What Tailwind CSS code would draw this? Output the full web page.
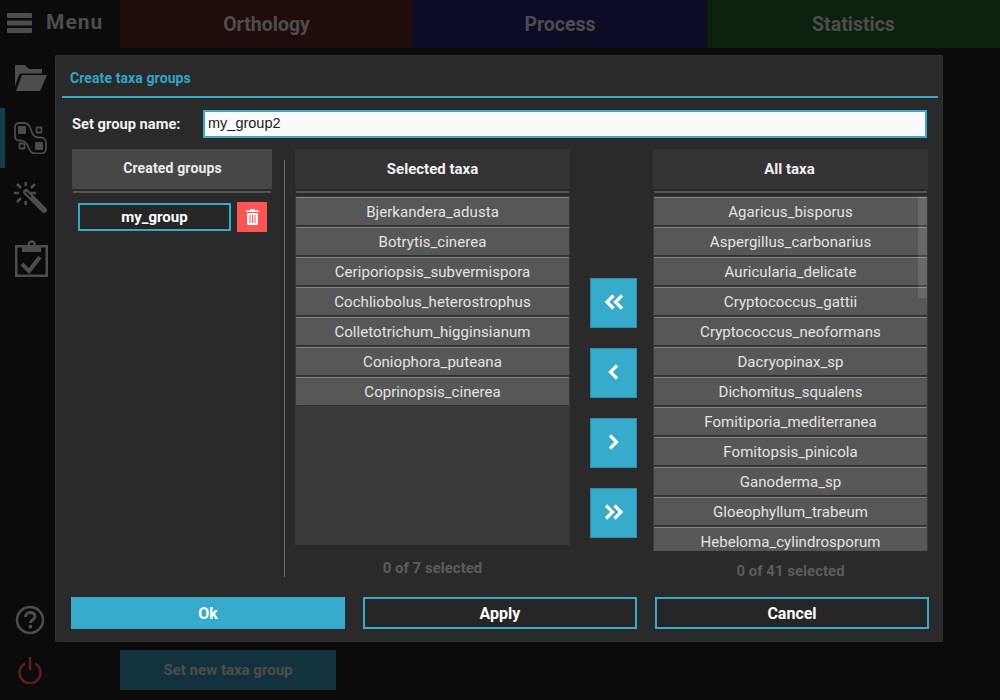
<!DOCTYPE html>
<html lang="en">
<head>
    <meta charset="UTF-8">
    <title>Create taxa groups</title>
    <script src="https://cdn.jsdelivr.net/npm/@tailwindcss/browser@4"></script>
</head>
<body class="bg-[#0b0b0b] font-['Roboto',sans-serif] overflow-hidden">
<div class="relative w-[1000px] h-[700px] flex flex-col">

    <!-- Top bar, dimmed behind the dialog -->
    <header class="flex h-[48px] shrink-0">
        <div class="w-[120px] flex items-center pl-[7px] gap-[14px] pb-[3px] text-[#4d4d4d]">
            <svg width="25" height="20" viewBox="0 0 25 20" fill="#4d4d4d"><rect width="25" height="5" y="0" rx="1"/><rect width="25" height="5" y="7.500" rx="1"/><rect width="25" height="5" y="15" rx="1"/></svg>
            <span class="text-[21px] font-bold tracking-[1px]">Menu</span>
        </div>
        <div class="w-[293px] pt-[2px] flex items-center justify-center bg-[#210c0c] text-[#4d4d4d] text-[19.500px] font-bold">Orthology</div>
        <div class="w-[294px] pt-[2px] flex items-center justify-center bg-[#0c0c27] text-[#4d4d4d] text-[19.500px] font-bold">Process</div>
        <div class="w-[293px] pt-[2px] flex items-center justify-center bg-[#0c210c] text-[#4d4d4d] text-[19.500px] font-bold">Statistics</div>
    </header>

    <div class="flex flex-1">
        <!-- Side rail -->
        <aside class="w-[60px] flex flex-col">
            <div class="h-[60px] flex items-center justify-center pl-[2px]">
                <svg width="32" height="26" viewBox="0 0 32 26" fill="#4d4d4d"><path d="M0 0h10l4 4h13v4.500H6a2 2 0 0 0-2 1.500L0 21z"/><path d="M7 10h25l-7 16H1z"/></svg>
            </div>
            <div class="h-[60px] flex items-center justify-center border-l-[5px] border-[#123d4a] pr-[4px]">
                <svg width="33" height="32" viewBox="0 0 33 32" fill="none" stroke="#4a4a4a" stroke-width="1.800"><path d="M5 1h5c4 0 6 3 7 7s3 7 7 7.500h3a5 5 0 0 1 5 5v6a5 5 0 0 1-5 5h-6c-3 0-5-2-6-5s-3-7-7-8H5a4 4 0 0 1-4-4V5a4 4 0 0 1 4-4z"/><rect x="4" y="4" width="8" height="8" rx="1" fill="#4a4a4a" stroke="none"/><rect x="22.500" y="5.500" width="5" height="5" rx="0.500"/><rect x="5.500" y="21.500" width="5" height="5" rx="0.500"/><rect x="21" y="20" width="8" height="8" rx="1" fill="#4a4a4a" stroke="none"/></svg>
            </div>
            <div class="h-[60px] flex items-center justify-center pl-[2px]">
                <svg width="34" height="34" viewBox="0 0 34 34" fill="none" stroke="#4d4d4d" stroke-width="2.500"><path d="M12 11l18 18" stroke-width="6" stroke-linecap="round"/><path d="M12 11l5 5" stroke="#0b0b0b" stroke-width="1.500"/><path d="M11.700 1v4M11.700 20v4M0 12h5M17 12h5M3 3l4 4M21 3l-4 4M3 21l4-4"/></svg>
            </div>
            <div class="h-[60px] flex items-center justify-center pl-[2px]">
                <svg width="33" height="37" viewBox="0 0 33 37" fill="none" stroke="#4d4d4d" stroke-width="2.500"><path d="M7 6.200H1.250v29.500h30.500V6.200H26"/><rect x="7" y="5" width="19" height="7" fill="#4d4d4d" stroke="none"/><circle cx="16.700" cy="4.500" r="3"/><path d="M7 24l7 7 11-14" stroke-width="4"/></svg>
            </div>
            <div class="mt-auto h-[50px] flex items-center justify-center">
                <svg width="30" height="30" viewBox="0 0 30 30" fill="none" stroke="#4d4d4d" stroke-width="2.500"><circle cx="15" cy="15" r="13"/><path d="M10.500 12c0-6 9.500-6 9.500-.5 0 3-4.500 3.500-4.500 6.500" stroke-width="3"/><rect x="13.700" y="20" width="3.400" height="3.400" fill="#4d4d4d" stroke="none"/></svg>
            </div>
            <div class="h-[55px] flex items-start justify-center pt-[12px]">
                <svg width="24" height="27" viewBox="0 0 24 27" fill="none" stroke="#5f1d1d" stroke-width="2.500"><path d="M7 6.500a10.500 10.500 0 1 0 10 0"/><path d="M12 0v13"/></svg>
            </div>
        </aside>
        <main class="flex-1 flex items-end pl-[60px] pb-[10px]">
            <button class="w-[216px] h-[40px] bg-[#12333d] text-[#4d4d4d] text-[15px] font-bold">Set new taxa group</button>
        </main>
    </div>

    <!-- Modal dialog -->
    <section class="absolute left-[55px] top-[55px] w-[888px] h-[587px] bg-[#2a2a2a] rounded-[2px] shadow-[inset_0_0_0_1px_#303030] flex flex-col">
        <h2 class="h-[41px] pl-[15px] pt-[5px] flex items-center text-[14px] font-bold tracking-[0.1px] text-[#33a5c8]">Create taxa groups</h2>
        <div class="h-[2px] ml-[7px] mr-[5px] bg-[#38a9c9]"></div>

        <div class="mt-[12px] flex items-center h-[28px] pl-[17px]">
            <label class="w-[131px] text-[14.700px] font-bold text-[#f0f0f0]">Set group name:</label>
            <div class="w-[724px] h-[28px] bg-[#fafafa] border-2 border-[#38a9c9] flex items-center pl-[3px] text-[14.500px] text-[#1a1a1a] font-['Liberation_Sans',sans-serif]">my_group2</div>
        </div>

        <div class="mt-[11px] h-[428px] flex pl-[17px]">
            <!-- Created groups -->
            <div class="w-[200px] flex flex-col">
                <div class="h-[40px] shrink-0 pb-[1px] pl-[1px] bg-[#474747] flex items-center justify-center text-[14px] tracking-[0.15px] font-bold text-[#ececec]">Created groups</div>
                <div class="h-[2px] shrink-0 mt-[2px] mx-[1px] bg-[#555555]"></div>
                <div class="mt-[9px] flex items-center pl-[6px] gap-[6px]">
                    <div class="w-[153px] h-[28px] border-2 border-[#38a9c9] bg-[#262626] flex items-center justify-center text-[15px] font-bold text-white">my_group</div>
                    <button class="w-[30px] h-[30px] bg-[#ff5555] flex items-center justify-center">
                        <svg width="13" height="16" viewBox="0 0 13 16" fill="#ffffff"><path d="M4.500 0h4l.6 1.500H13V3H0V1.500h3.900z"/><path fill-rule="evenodd" d="M1 4h11v10.500a1.500 1.500 0 0 1-1.500 1.500h-8A1.500 1.500 0 0 1 1 14.500zM3.500 6v8h1V6zM6 6v8h1V6zM8.500 6v8h1V6z"/></svg>
                    </button>
                </div>
            </div>

            <div class="w-[1px] ml-[12px] mt-[11px] bg-[#6e6e6e]"></div>

            <!-- Selected taxa -->
            <div class="w-[275px] ml-[10px] flex flex-col">
                <div class="h-[40px] shrink-0 bg-[#333333] flex items-center justify-center text-[15px] font-bold text-[#f0f0f0]">Selected taxa</div>
                <div class="h-[2px] shrink-0 mt-[2px] mx-[1px] bg-[#555555]"></div>
                <div id="selected" class="mt-[3px] h-[349px] shrink-0 bg-[#393939] p-[1px] flex flex-col gap-[1px]"></div>
                <div class="h-[32px] shrink-0 pt-[14px] flex items-center justify-center text-[15px] font-bold text-[#5c5c5c]">0 of 7 selected</div>
            </div>

            <!-- Transfer buttons -->
            <div class="w-[47px] ml-[20px] pt-[129px] flex flex-col gap-[20px]">
                <button class="h-[50px] pb-[2px] bg-[#36abcb] border border-[#2e8ca8] flex items-center justify-center"><svg width="20" height="16" viewBox="0 0 20 16" fill="none" stroke="#fff" stroke-width="3.200"><path d="M9.500 1.500 3 8l6.500 6.500M18 1.500 11.500 8l6.500 6.500"/></svg></button>
                <button class="h-[50px] pb-[2px] bg-[#36abcb] border border-[#2e8ca8] flex items-center justify-center"><svg width="11" height="16" viewBox="0 0 11 16" fill="none" stroke="#fff" stroke-width="3.200"><path d="M9 1.500 2.500 8 9 14.500"/></svg></button>
                <button class="h-[50px] pb-[2px] bg-[#36abcb] border border-[#2e8ca8] flex items-center justify-center"><svg width="11" height="16" viewBox="0 0 11 16" fill="none" stroke="#fff" stroke-width="3.200"><path d="M2 1.500 8.500 8 2 14.500"/></svg></button>
                <button class="h-[50px] pb-[2px] bg-[#36abcb] border border-[#2e8ca8] flex items-center justify-center"><svg width="20" height="16" viewBox="0 0 20 16" fill="none" stroke="#fff" stroke-width="3.200"><path d="M2 1.500 8.500 8 2 14.500M10.500 1.500 17 8l-6.500 6.500"/></svg></button>
            </div>

            <!-- All taxa -->
            <div class="w-[275px] ml-[16px] flex flex-col">
                <div class="h-[40px] shrink-0 pr-[2px] bg-[#333333] flex items-center justify-center text-[15px] font-bold text-[#f0f0f0]">All taxa</div>
                <div class="h-[2px] shrink-0 mt-[2px] mx-[1px] bg-[#555555]"></div>
                <div class="relative mt-[3px] h-[355px] shrink-0 overflow-hidden">
                    <div id="all" class="h-full bg-[#393939] p-[1px] flex flex-col gap-[1px]"></div>
                    <div class="absolute right-[1px] top-[1px] w-[9px] h-[101px] bg-white/10"></div>
                </div>
                <div class="h-[26px] shrink-0 pt-[14px] flex items-center justify-center text-[15px] font-bold text-[#5c5c5c]">0 of 41 selected</div>
            </div>
        </div>

        <div class="mt-[20px] flex pl-[16px] gap-[18px]">
            <button class="w-[274px] h-[32px] pt-[2px] bg-[#36abcb] text-[16px] font-bold text-white">Ok</button>
            <button class="w-[274px] h-[32px] pt-[2px] border-2 border-[#36abcb] bg-[#262626] text-[16px] font-bold text-white">Apply</button>
            <button class="w-[274px] h-[32px] pt-[2px] border-2 border-[#36abcb] bg-[#262626] text-[16px] font-bold text-white">Cancel</button>
        </div>
    </section>
</div>

<script>
    const selectedTaxa = ['Bjerkandera_adusta', 'Botrytis_cinerea', 'Ceriporiopsis_subvermispora', 'Cochliobolus_heterostrophus', 'Colletotrichum_higginsianum', 'Coniophora_puteana', 'Coprinopsis_cinerea'];
    const allTaxa = ['Agaricus_bisporus', 'Aspergillus_carbonarius', 'Auricularia_delicate', 'Cryptococcus_gattii', 'Cryptococcus_neoformans', 'Dacryopinax_sp', 'Dichomitus_squalens', 'Fomitiporia_mediterranea', 'Fomitopsis_pinicola', 'Ganoderma_sp', 'Gloeophyllum_trabeum', 'Hebeloma_cylindrosporum'];

    function fillList(id, names) {
        const list = document.getElementById(id);
        names.forEach(name => {
            const row = document.createElement('div');
            row.className = 'h-[29px] shrink-0 pt-[2px] bg-[#575757] border-t border-[#858585] border-b border-b-[#303030] rounded-[1px] flex items-center justify-center text-[15px] tracking-[0.05px] text-[#e4e4e4]';
            row.textContent = name;
            list.appendChild(row);
        });
    }

    fillList('selected', selectedTaxa);
    fillList('all', allTaxa);
</script>
</body>
</html>
